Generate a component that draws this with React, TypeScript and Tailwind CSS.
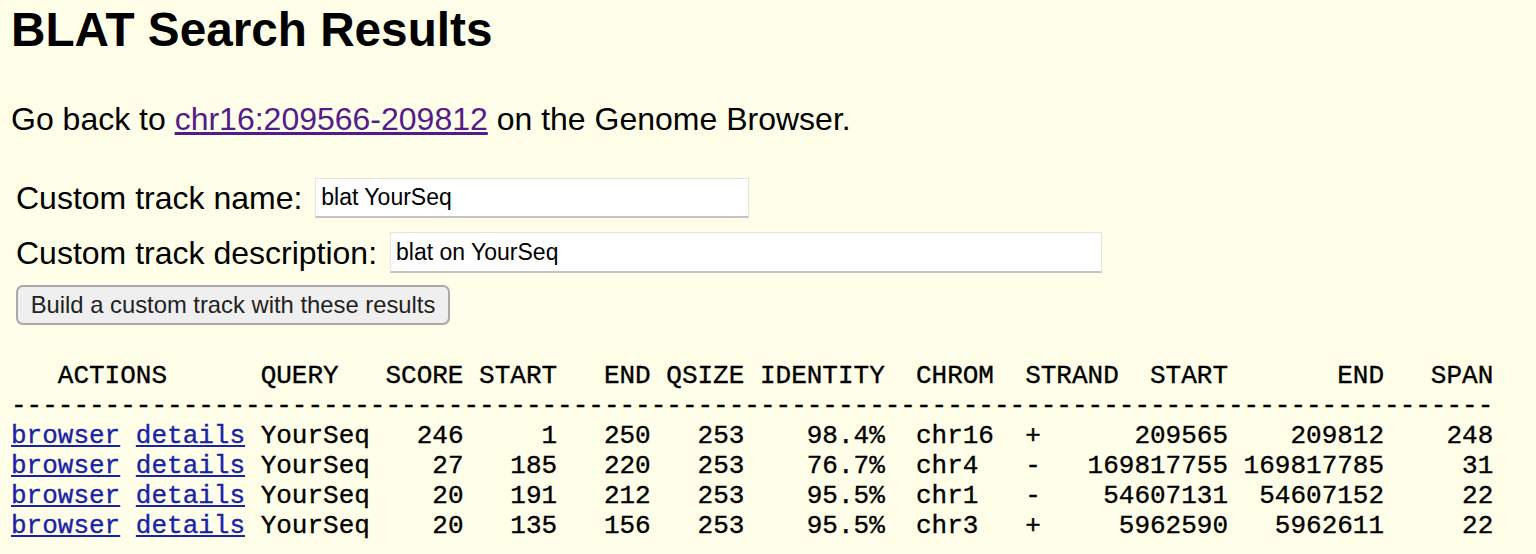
const hits = [
  { score: 246, qStart: 1, qEnd: 250, qSize: 253, identity: '98.4%', chrom: 'chr16', strand: '+', tStart: 209565, tEnd: 209812, span: 248 },
  { score: 27, qStart: 185, qEnd: 220, qSize: 253, identity: '76.7%', chrom: 'chr4', strand: '-', tStart: 169817755, tEnd: 169817785, span: 31 },
  { score: 20, qStart: 191, qEnd: 212, qSize: 253, identity: '95.5%', chrom: 'chr1', strand: '-', tStart: 54607131, tEnd: 54607152, span: 22 },
  { score: 20, qStart: 135, qEnd: 156, qSize: 253, identity: '95.5%', chrom: 'chr3', strand: '+', tStart: 5962590, tEnd: 5962611, span: 22 },
]

const header =
  '   ACTIONS      QUERY   SCORE START   END QSIZE IDENTITY  CHROM  STRAND  START       END   SPAN'

// the psl columns after the two links, padded like the plain-text output
function line(h: (typeof hits)[number]) {
  return (
    'YourSeq' +
    String(h.score).padStart(6) +
    String(h.qStart).padStart(6) +
    String(h.qEnd).padStart(6) +
    String(h.qSize).padStart(6) +
    h.identity.padStart(9) +
    '  ' +
    h.chrom.padEnd(7) +
    h.strand +
    String(h.tStart).padStart(12) +
    String(h.tEnd).padStart(10) +
    String(h.span).padStart(7)
  )
}

export default function App() {
  return (
    <div className="min-h-[554px] bg-[#fffee8] px-[11px] font-['Liberation_Sans',Arial,sans-serif] text-black">
      <h1 className="pt-[6px] text-[47.7px] font-bold leading-[47px]">BLAT Search Results</h1>

      <p className="mt-[50px] text-[32px] leading-[32px]">
        Go back to{' '}
        <a href="#" className="text-[#551a8b] underline">
          chr16:209566-209812
        </a>{' '}
        on the Genome Browser.
      </p>

      <form className="mt-[43px] flex flex-col items-start pl-[5px]">
        <div className="flex h-[40px] items-center gap-[13px]">
          <label className="text-[32px] leading-[32px]">Custom track name:</label>
          <input
            defaultValue="blat YourSeq"
            className="h-[40px] w-[434px] border border-[#e4e4dc] border-b-2 border-b-[#c4c4c4] bg-white pl-[5px] text-[23px] outline-none"
          />
        </div>
        <div className="mt-[14px] flex h-[41px] items-center gap-[13px]">
          <label className="text-[32px] leading-[32px]">Custom track description:</label>
          <input
            defaultValue="blat on YourSeq"
            className="h-[41px] w-[712px] border border-[#e4e4dc] border-b-2 border-b-[#c4c4c4] bg-white pl-[5px] text-[23px] outline-none"
          />
        </div>
        <button
          type="button"
          className="mt-[12px] h-[40px] w-[434px] rounded-[7px] border-2 border-[#a9a9a9] bg-[#efefef] text-[23.8px] leading-none text-[#222]"
        >
          Build a custom track with these results
        </button>
      </form>

      <pre className="mt-[36px] font-['Liberation_Mono','Courier_New',monospace] text-[26px] leading-[30px] [-webkit-text-stroke:0.35px_currentColor]">
        {header}
        {'\n'}
        {'-'.repeat(95)}
        {'\n'}
        {hits.map((h, i) => (
          <span key={i}>
            <a href="#" className="text-[#1a22a8] underline">
              browser
            </a>{' '}
            <a href="#" className="text-[#1a22a8] underline">
              details
            </a>{' '}
            {line(h)}
            {'\n'}
          </span>
        ))}
      </pre>
    </div>
  )
}
